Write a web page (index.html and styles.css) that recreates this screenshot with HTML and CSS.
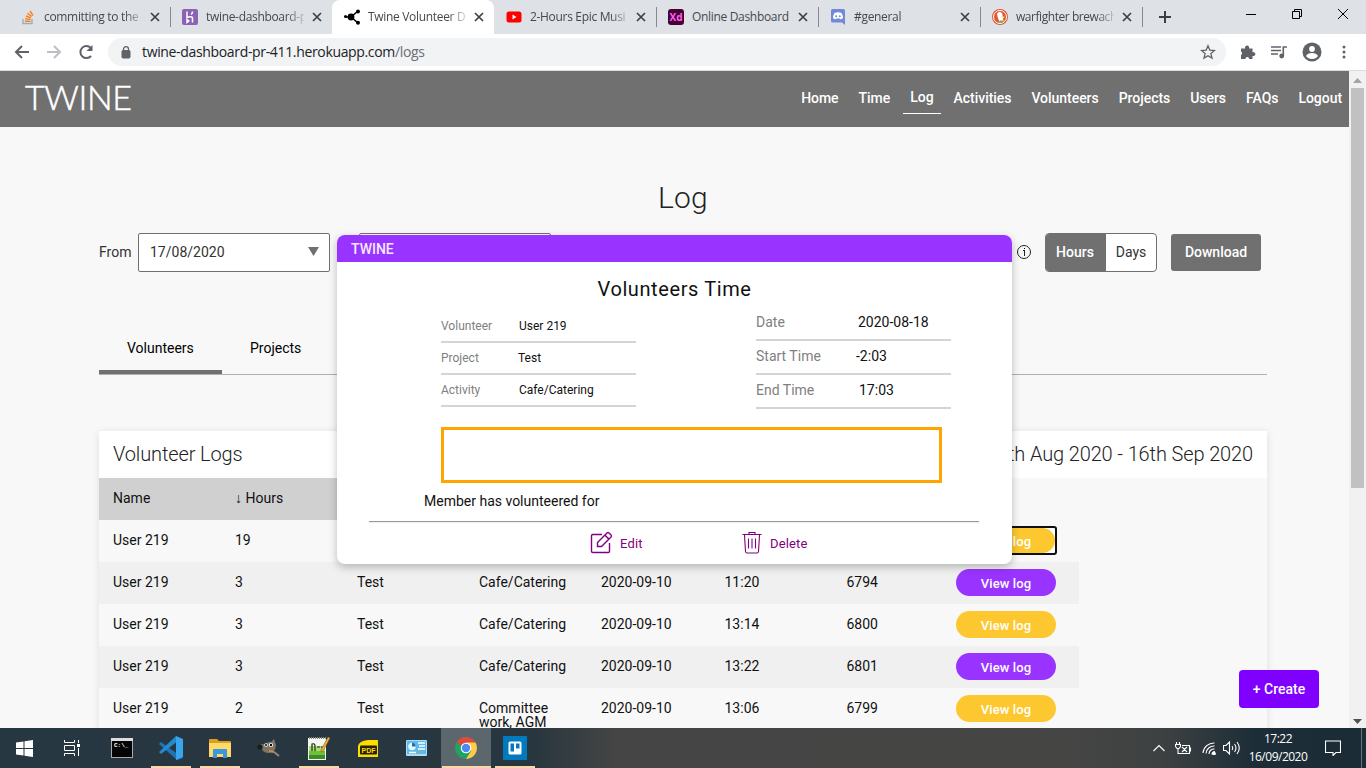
FILE: index.html
```html
<!DOCTYPE html>
<html lang="en">
<head>
<meta charset="utf-8">
<title>Twine Volunteer Dashboard</title>
<link rel="stylesheet" href="styles.css">
</head>
<body>
<div class="screen">
  <div class="tabstrip">
    <div class="tab"><svg class="fav" viewBox="0 0 16 16"><path d="M3 10v4.5h9V10" fill="none" stroke="#a8abae" stroke-width="1.4"/><path d="M5 12.3h5.5M5.2 9.8l5.4.6M5.9 7l5.1 1.8M7.4 4.2l4.3 3.3M10 2l3 4.6" stroke="#f48024" stroke-width="1.4"/></svg><span class="tab-title">committing to the</span><svg class="x" viewBox="0 0 10 10"><path d="M1 1l8 8M9 1l-8 8"/></svg></div>
    <div class="tab sep"><svg class="fav" viewBox="0 0 16 16"><rect width="16" height="16" rx="2" fill="#8a63b5"/><path d="M5 2.5v6c2-1 5.500-1.500 5.500.5v4.500M10.500 2.500c0 1.500-.5 2.300-1.300 3M5 10.500v3l1.800-1.500z" fill="none" stroke="#fff" stroke-width="1.500"/></svg><span class="tab-title">twine-dashboard-p</span><svg class="x" viewBox="0 0 10 10"><path d="M1 1l8 8M9 1l-8 8"/></svg></div>
    <div class="tab active"><svg class="fav" viewBox="0 0 16 16"><path d="M1 8h6M7 8l7-6M7 8l7 6" stroke="#000" stroke-width="1.600"/><circle cx="7" cy="8" r="3.400"/><circle cx="1.500" cy="7.500" r="1.500"/><circle cx="14" cy="2.500" r="2"/><circle cx="14" cy="13.800" r="2"/></svg><span class="tab-title">Twine Volunteer D</span><svg class="x" viewBox="0 0 10 10"><path d="M1 1l8 8M9 1l-8 8"/></svg></div>
    <div class="tab"><svg class="fav" viewBox="0 0 16 16"><rect x=".5" y="2.500" width="15" height="11" rx="2.500" fill="#f00"/><path d="M6.500 5.500v5l4-2.500z" fill="#fff"/></svg><span class="tab-title">2-Hours Epic Musi</span><svg class="x" viewBox="0 0 10 10"><path d="M1 1l8 8M9 1l-8 8"/></svg></div>
    <div class="tab sep"><span class="fav xd">Xd</span><span class="tab-title full">Online Dashboard</span><svg class="x" viewBox="0 0 10 10"><path d="M1 1l8 8M9 1l-8 8"/></svg></div>
    <div class="tab sep"><svg class="fav" viewBox="0 0 16 16"><path d="M2.500 0h11Q15 0 15 1.500V16l-3-2.500H2.500Q1 13.500 1 12V1.500Q1 0 2.500 0z" fill="#7289da"/><path d="M4.500 4q3.500-1.300 7 0 1.500 2.500 1.500 5-1.200 1.200-2.600 1.200l-.6-.8H6.200l-.6.800Q4.200 10.200 3 9q0-2.500 1.500-5z" fill="#fff"/><circle cx="6.200" cy="7.300" r="1" fill="#7289da"/><circle cx="9.800" cy="7.300" r="1" fill="#7289da"/></svg><span class="tab-title">#general</span><svg class="x" viewBox="0 0 10 10"><path d="M1 1l8 8M9 1l-8 8"/></svg></div>
    <div class="tab sep"><svg class="fav" viewBox="0 0 16 16"><circle cx="8" cy="8" r="8" fill="#de5833"/><circle cx="8" cy="8" r="6.500" fill="none" stroke="#fff"/><path d="M5 5q1-2.500 3.500-1.800Q11 4 10.500 7l2 1.200-1.500 1 .5 3.300-3.500 1.400Q5.500 9.500 5 5z" fill="#fff"/><path d="M9 7.400l3.500.4-2.500 1z" fill="#fdb813"/><path d="M7.500 11.500h4l-1 2-3 .5z" fill="#5fb54b"/></svg><span class="tab-title tight">warfighter brewach</span><svg class="x" viewBox="0 0 10 10"><path d="M1 1l8 8M9 1l-8 8"/></svg></div>
    <div class="newtab sep"><svg width="12" height="12" viewBox="0 0 12 12"><path d="M6 0v12M0 6h12" stroke="#3c4043" stroke-width="2"/></svg></div>
    <div class="winbtns">
      <svg width="10" height="10" viewBox="0 0 10 10"><path d="M0 5.500h10"/></svg>
      <svg width="10" height="10" viewBox="0 0 10 10"><path d="M.5 2.500h7v7h-7zM2.500 2V.5h7v7H8"/></svg>
      <svg width="10" height="10" viewBox="0 0 10 10"><path d="M0 0l10 10M10 0L0 10"/></svg>
    </div>
  </div>

  <div class="toolbar">
    <div class="navicons">
      <svg width="16" height="14" viewBox="0 0 16 14"><path d="M15 7H2M8 1L2 7l6 6" fill="none" stroke="#5f6368" stroke-width="2"/></svg>
      <svg width="16" height="14" viewBox="0 0 16 14"><path d="M1 7h13M8 1l6 6-6 6" fill="none" stroke="#bdc1c6" stroke-width="2"/></svg>
      <svg width="16" height="16" viewBox="0 0 16 16"><path d="M13 12a6 6 0 1 1-.2-8" fill="none" stroke="#5f6368" stroke-width="2"/><path d="M14.500 1v6H8.500z" fill="#5f6368"/></svg>
    </div>
    <div class="omnibox">
      <svg width="10" height="13" viewBox="0 0 10 13"><rect x="1" y="4.500" width="8" height="7.500" rx="1" fill="#5f6368" stroke="#5f6368"/><path d="M2.500 5V3.200a2.500 2.500 0 0 1 5 0V5" fill="none" stroke="#5f6368" stroke-width="1.300"/></svg>
      <span class="url">twine-dashboard-pr-411.herokuapp.com<i>/logs</i></span>
      <svg width="16" height="16" viewBox="0 0 16 16"><path d="M8 1.800l1.800 4.300 4.700.4-3.600 3.100 1.100 4.500L8 11.700l-4 2.400 1.100-4.500L1.500 6.500l4.700-.4z" fill="none" stroke="#5f6368" stroke-width="1.300"/></svg>
    </div>
    <div class="exticons">
      <svg width="16" height="16" viewBox="0 0 16 16"><path d="M1 4.500h4.200a2.100 2.100 0 1 1 3.800 0h3.500v3.800a2 2 0 1 1 0 3.600V15H9.200a1.900 1.900 0 0 0-3.800 0H1v-4a2 2 0 0 0 0-3.600z" fill="#5f6368"/></svg>
      <svg width="18" height="16" viewBox="0 0 18 16"><path d="M1 3h10M1 6.500h10M1 10h7M13.300 12V3H17" fill="none" stroke="#5f6368" stroke-width="1.600"/><circle cx="11.700" cy="12" r="2.400" fill="#5f6368"/></svg>
      <svg width="20" height="20" viewBox="0 0 20 20"><circle cx="10" cy="10" r="9.500" fill="#5f6368"/><circle cx="10" cy="7" r="2.900" fill="#fff"/><path d="M4 14q1.500-3 6-3t6 3q-2 3-6 3t-6-3z" fill="#fff"/></svg>
      <svg width="4" height="14" viewBox="0 0 4 14"><g fill="#5f6368"><circle cx="2" cy="2" r="1.500"/><circle cx="2" cy="7" r="1.500"/><circle cx="2" cy="12" r="1.500"/></g></svg>
    </div>
  </div>

  <div class="viewport">
    <div class="page">
      <nav class="nav">
        <span class="logo">TWINE</span>
        <div class="links"><a>Home</a><a>Time</a><a class="current">Log</a><a>Activities</a><a>Volunteers</a><a>Projects</a><a>Users</a><a>FAQs</a><a>Logout</a></div>
      </nav>
      <h1>Log</h1>
      <div class="filters">
        <span class="from">From</span>
        <div class="select">17/08/2020<svg width="11" height="9" viewBox="0 0 11 9"><path d="M0 0h11L5.500 9z" fill="#707070"/></svg></div>
        <div class="select second"></div>
        <svg class="info" width="14" height="14" viewBox="0 0 14 14"><circle cx="7" cy="7" r="6.500" fill="none" stroke="#222"/><path d="M7.500 5v6M6 5.500h1.500" fill="none" stroke="#222"/><path d="M7 3h1v1H7z"/></svg>
        <div class="toggle"><b>Hours</b><span>Days</span></div>
        <div class="download">Download</div>
      </div>
      <div class="ptabs"><span class="on">Volunteers</span><span>Projects</span></div>
      <section class="card">
        <div class="cardhead"><span>Volunteer Logs</span><span>17th Aug 2020 - 16th Sep 2020</span></div>
        <div class="row thead"><span>Name</span><span>↓ Hours</span></div>
        <div class="row"><span>User 219</span><span>19</span><span></span><span></span><span></span><span></span><span></span><button class="focus"><em class="pill">View log</em></button></div>
        <div class="row alt"><span>User 219</span><span>3</span><span>Test</span><span>Cafe/Catering</span><span>2020-09-10</span><span>11:20</span><span>6794</span><button class="pill violet">View log</button></div>
        <div class="row"><span>User 219</span><span>3</span><span>Test</span><span>Cafe/Catering</span><span>2020-09-10</span><span>13:14</span><span>6800</span><button class="pill">View log</button></div>
        <div class="row alt"><span>User 219</span><span>3</span><span>Test</span><span>Cafe/Catering</span><span>2020-09-10</span><span>13:22</span><span>6801</span><button class="pill violet">View log</button></div>
        <div class="row"><span>User 219</span><span>2</span><span>Test</span><span>Committee work, AGM</span><span>2020-09-10</span><span>13:06</span><span>6799</span><button class="pill">View log</button></div>
      </section>

      <div class="modal">
        <div class="mhead">TWINE</div>
        <h2>Volunteers Time</h2>
        <div class="fields">
          <dl class="small">
            <div><dt>Volunteer</dt><dd>User 219</dd></div>
            <div><dt>Project</dt><dd class="nudge-l">Test</dd></div>
            <div><dt>Activity</dt><dd>Cafe/Catering</dd></div>
          </dl>
          <dl class="large">
            <div><dt>Date</dt><dd>2020-08-18</dd></div>
            <div><dt>Start Time</dt><dd class="nudge-l">-2:03</dd></div>
            <div><dt>End Time</dt><dd class="nudge-r">17:03</dd></div>
          </dl>
        </div>
        <div class="notes"></div>
        <p class="member">Member has volunteered for</p>
        <hr>
        <div class="actions">
          <span class="edit"><svg width="23" height="23" viewBox="0 0 23 23"><path d="M12 3.500H2.800Q1.500 3.500 1.500 4.800v15.400q0 1.300 1.300 1.300h15.400q1.300 0 1.300-1.300V12" /><path d="M7.500 15.500v-4L17 2q1-1 2 0l2 2q1 1 0 2l-9.500 9.500zM15 4.200L18.800 8"/></svg><em>Edit</em></span>
          <span class="delete"><svg width="20" height="23" viewBox="0 0 20 23"><path d="M.5 3.500h19M7 3V1.500h6V3M2.500 4l1 16.500q.2 1.500 1.500 1.500h10q1.300 0 1.500-1.500L17.500 4M6.500 7.500v10M10 7.500v10M13.500 7.500v10"/></svg><em>Delete</em></span>
        </div>
      </div>
      <div class="create">+ Create</div>
    </div>
    <div class="scrollbar">
      <svg width="9" height="5" viewBox="0 0 9 5"><path d="M0 5h9L4.500 0z" fill="#a3a3a3"/></svg>
      <div class="thumb"></div>
      <svg width="9" height="5" viewBox="0 0 9 5"><path d="M0 0h9L4.500 5z" fill="#505050"/></svg>
    </div>
  </div>

  <div class="taskbar">
    <div class="task start"><svg width="17" height="17" viewBox="0 0 17 17"><path d="M0 2.500l7.500-1V8H0zM8.500 1.300L17 0v8H8.500zM0 9h7.500v6.500l-7.500-1zM8.500 9H17v8l-8.500-1.300z" fill="#fff"/></svg></div>
    <div class="task start"><svg width="16" height="16" viewBox="0 0 16 16"><path d="M.5 0v2.500h10V0M.5 16v-2.500h10V16M.5 5.500h10v5H.5zM14.500 0v3M14.500 8v8" fill="none" stroke="#fff"/><path d="M13 4h3v3h-3z" fill="#fff"/></svg></div>
    <div class="task first"><svg width="22" height="20" viewBox="0 0 22 20"><path d="M0 0h22v20H0z" fill="#aaa"/><path d="M0 0h22v3H0z" fill="#ddd"/><path d="M1 3h20v16H1z" fill="#050505"/><text x="3" y="9" class="cmdtext">C:\_</text></svg></div>
    <div class="task open"><svg width="24" height="24" viewBox="0 0 24 24"><path d="M0 8l2-2 22 16-6 2z" fill="#1b75b8"/><path d="M0 16l2 2L19 5 17 0z" fill="#228bd0"/><path d="M17 0l7 3v18l-7 3z" fill="#39a5ef"/></svg></div>
    <div class="task open"><svg width="22" height="20" viewBox="0 0 22 20"><path d="M0 2q0-1 1-1h7l2 2h11q1 0 1 1v14H0z" fill="#dda01e"/><path d="M0 5h22v14H0z" fill="#ffd96b"/><path d="M4 20v-8q0-1 1-1h12q1 0 1 1v8h-4v-4H8v4z" fill="#3a96dd"/></svg></div>
    <div class="task"><svg width="24" height="20" viewBox="0 0 24 20"><path d="M5 6q3 1 5-1 2-2 4-1l3-3 2 6q0 7-7 8-6 0-7-4-4 0-4-3z" fill="#7b7569"/><circle cx="3" cy="9" r="2.600" fill="#1c1c1c"/><circle cx="9" cy="7" r="1.800" fill="#fff"/><circle cx="14" cy="7" r="2.100" fill="#fff"/><circle cx="9" cy="7" r="1"/><circle cx="14" cy="7" r="1.200"/><path d="M12 13l5 1" fill="none" stroke="#d8893b" stroke-width="2"/><path d="M17 14l5 4" stroke="#888" stroke-width="2"/></svg></div>
    <div class="task open"><svg width="24" height="24" viewBox="0 0 24 24"><path d="M1 2h18v22H1z" fill="#f4f7ee"/><path d="M2 10h16v13H2z" fill="#a4e070"/><path d="M2 15h16v8H2z" fill="#6dbf3c"/><path d="M2 19h16v4H2z" fill="#3d8e27"/><path d="M2 2h17" stroke="#888" stroke-dasharray="1 1" stroke-width="2"/><path d="M5 15V8q3-1 3 2v5M10 11h3M14 11h3" fill="none" stroke="#222" stroke-width="1.200"/><path d="M21 1l2 1-7 13-2 1v-2z" fill="#f5b335" stroke="#86602c" stroke-width=".6"/></svg></div>
    <div class="task"><svg width="20" height="17" viewBox="0 0 20 17"><path d="M0 6Q1 1 10 0h10v17H0z" fill="#fddc00"/><rect x="2" y="5.500" width="17" height="9" rx="1" fill="#26220b"/><text x="3.500" y="13" textLength="14" lengthAdjust="spacingAndGlyphs" class="pdftext">PDF</text></svg></div>
    <div class="task"><svg width="21" height="16" viewBox="0 0 21 16"><rect width="21" height="16" rx="1" fill="#a7ddf7"/><path d="M1 1h19v13H1z" fill="#5bb9ec"/><circle cx="6" cy="6.500" r="3.800" fill="#e6f7ff"/><path d="M6 6.500V2.700a3.800 3.800 0 0 1 3.800 3.800z" fill="#1871b8"/><path d="M12 3h7M13 6h6M12 9h7M3 12.500h7" stroke="#fff" stroke-width="1.500"/><path d="M11 11.500l2 2 2-2" fill="#e8a33d"/></svg></div>
    <div class="task open chosen"><svg width="22" height="22" viewBox="0 0 22 22"><path d="M11 11L1.500 5.500a11 11 0 0 1 19 0z" fill="#dd4b3e"/><path d="M11 11L1.500 5.500A11 11 0 0 0 11 22l5-8z" fill="#1da362"/><path d="M11 22a11 11 0 0 0 9.500-16.500H11l5 8.500z" fill="#ffcd46"/><circle cx="11" cy="11" r="5.300" fill="#fff"/><circle cx="11" cy="11" r="4.200" fill="#4a8af4"/></svg></div>
    <div class="task open"><svg width="24" height="24" viewBox="0 0 24 24"><path d="M0 0h24v24H0z" fill="#0079bf"/><rect x="5.500" y="5.500" width="13" height="13" rx="1.500" fill="#fff"/><path d="M7.500 7.500h3.500v8H7.500zM13 7.500h3.500v5H13z" fill="#0079bf"/></svg></div>
    <div class="tray">
      <svg class="t1" width="12" height="8" viewBox="0 0 12 8"><path d="M.5 7L6 1.500 11.500 7"/></svg>
      <svg class="t2" width="17" height="12" viewBox="0 0 17 12"><path d="M1.500 0v2M4.500 0v2M.5 2.500h5v2l-1.500 2H2l-1.500-2zM3 6v5.500h11.500v-8H7M15.500 5.500v4M7 5l5 5M12 5l-5 5"/></svg>
      <svg class="t3" width="14" height="14" viewBox="0 0 14 14"><path d="M1 12A11 11 0 0 1 12.500 2M4 12.500A8 8 0 0 1 12.500 5M7 13a5 5 0 0 1 5.500-5M10 13.500a3 3 0 0 1 3-3"/><circle cx="12" cy="12.500" r="1.300" fill="#fff"/></svg>
      <svg class="t4" width="17" height="14" viewBox="0 0 17 14"><path d="M.5 4.500H3L6.500 1v12L3 9.500H.5zM9 5q1.500 2 0 4M11.500 3q3 4 0 8M14 1q4.500 6 0 12"/></svg>
      <div class="clock"><span>17:22</span><span>16/09/2020</span></div>
      <svg class="t5" width="16" height="16" viewBox="0 0 16 16"><path d="M.5 1h15v11.500H11l-3 3v-3H.5z"/></svg>
    </div>
  </div>
</div>
</body>
</html>
```
FILE: styles.css
```css
* { box-sizing: border-box; }
body { margin: 0; font-family: Roboto, "Liberation Sans", sans-serif; font-size: 14px; color: #111; }
h1, h2, p, dl, dd, hr { margin: 0; font-weight: 400; }
em { font-style: normal; }
svg { display: block; flex: none; }
.screen { width: 1366px; height: 768px; display: flex; flex-direction: column; overflow: hidden; }

/* browser frame */
.tabstrip { height: 34px; flex: none; background: #dee1e6; display: flex; padding-left: 8px; font: 12px/34px "Open Sans", "Noto Sans", sans-serif; color: #45494d; }
.tab { width: 162px; height: 34px; display: flex; align-items: center; padding-left: 12px; flex: none; }
.tab.active { background: #fff; border-radius: 8px 8px 0 0; }
.sep { background: linear-gradient(#85898d, #85898d) 0 7px / 1px 20px no-repeat; }
.fav { width: 16px; height: 16px; flex: none; }
.xd { background: #470137; color: #ff61f6; font: 700 10px/16px "Open Sans", sans-serif; text-align: center; border-radius: 3px; }
.tab-title { width: 98px; height: 34px; margin-left: 8px; white-space: nowrap; letter-spacing: -.32px; -webkit-mask-image: linear-gradient(90deg, #000 80px, transparent 102px); mask-image: linear-gradient(90deg, #000 80px, transparent 102px); }
.tab-title.full { -webkit-mask-image: none; mask-image: none; }
.tab-title.tight { letter-spacing: -.45px; }
.x { width: 10px; height: 10px; margin-left: 8px; stroke: #3c4043; stroke-width: 1.7; }
.newtab { width: 45px; display: flex; align-items: center; padding-left: 17px; }
.winbtns { margin-left: auto; display: flex; gap: 36px; padding: 9px 18px 0 0; fill: none; stroke: #000; }
.toolbar { height: 37px; flex: none; background: #fff; border-bottom: 1px solid #dadce0; display: flex; align-items: center; }
.navicons { display: flex; align-items: center; gap: 16px; padding-left: 14px; width: 108px; flex: none; }
.omnibox { width: 1118px; height: 28px; border-radius: 14px; background: #f1f3f4; display: flex; align-items: center; padding: 0 10px 0 13px; font: 14px/28px "Open Sans", "Noto Sans", sans-serif; }
.url { margin-left: 11px; flex: 1; color: #202124; letter-spacing: -.34px; }
.url i { font-style: normal; color: #6b6f73; }
.exticons { display: flex; align-items: center; gap: 14px; padding-left: 14px; }
.exticons svg:last-child { margin-left: 6px; }

/* application page */
.viewport { flex: 1; min-height: 0; display: flex; }
.page { width: 1349px; height: 657px; background: #f8f8f8; position: relative; overflow: hidden; }
.nav { height: 56px; background: #707070; display: flex; justify-content: space-between; color: #fff; }
.logo { font: 300 34px/51px Lato, "Open Sans", sans-serif; padding-left: 25px; letter-spacing: -.4px; -webkit-text-stroke: .5px #fff; }
.links { display: flex; gap: 6px; padding-top: 16px; font-weight: 500; letter-spacing: -.04px; }
.links a { height: 28px; line-height: 23px; padding: 0 7px; }
.links .current { height: 27px; line-height: 21px; border-bottom: 1px solid #fff; }
h1 { font-size: 30px; font-weight: 300; line-height: 36px; letter-spacing: .2px; width: 1366px; text-align: center; padding-top: 53px; height: 106px; color: #222; }
.filters { display: flex; align-items: center; height: 39px; padding-left: 99px; color: #333; }
.from { width: 39px; height: 18px; }
.select { width: 192px; height: 39px; background: #fff; border: 1px solid #707070; border-radius: 2px; display: flex; align-items: center; justify-content: space-between; padding: 0 10px 2px 11px; letter-spacing: 0; }
.select svg { margin-top: -1px; }
.second { margin-left: 29px; }
.info { margin: -2px 0 0 466px; }
.toggle { display: flex; width: 112px; height: 39px; margin-left: 14px; border: 1px solid #707070; border-radius: 4px; overflow: hidden; background: #fff; line-height: 37px; text-align: center; }
.toggle b { width: 60px; background: #707070; color: #fff; font-weight: 500; padding-right: 2px; }
.toggle span { flex: 1; }
.download { width: 90px; height: 37px; margin-left: 14px; border-radius: 3px; background: #707070; color: #fff; line-height: 37px; text-align: center; font-weight: 500; }
.ptabs { display: flex; margin: 49px 82px 0 99px; height: 54px; border-bottom: 1px solid #b0b0b0; color: #000; line-height: 54px; }
.ptabs span { padding: 0 28px; height: 54px; }
.ptabs .on { border-bottom: 4px solid #707070; width: 123px; height: 53px; }
.card { margin: 56px 82px 0 99px; height: 330px; box-shadow: 0 1px 8px rgba(0, 0, 0, .1); }
.cardhead { height: 47px; background: #fff; display: flex; justify-content: space-between; padding: 0 14px; font-size: 20px; font-weight: 300; line-height: 46px; color: #222; letter-spacing: -.13px; }
.row { width: 980px; height: 42px; display: grid; grid-template-columns: 122px 122px 122px 122px 123.5px 122px 109.5px 102px; padding: 13px 0 0 14px; line-height: 14px; }
.row.alt { background: #f0f0f0; }
.row.thead { width: 858px; background: #d0d0d0; }
.row span { width: 90px; }
.pill { display: block; width: 100px; height: 27px; margin-top: -6px; border: 0; border-radius: 14px; background: #fdc82f; color: #fff; font: 500 13px/29px Roboto, sans-serif; padding: 0; letter-spacing: .1px; text-align: center; }
.pill.violet { background: #9933ff; }
.focus { width: 102px; height: 29px; margin: -7px 0 0 -1px; border: 2px solid #101010; border-radius: 3px; background: #fff; padding: 0; display: flex; }
.focus .pill { width: 98px; height: 25px; margin: 0; line-height: 27px; }
.create { position: absolute; left: 1239px; top: 599px; width: 80px; height: 38px; border-radius: 4px; background: #8000ff; color: #fff; font-weight: 500; line-height: 38px; text-align: center; }

/* dialog */
.modal { position: absolute; left: 337px; top: 164px; width: 675px; height: 329px; border-radius: 8px; background: #fff; overflow: hidden; box-shadow: 0 3px 9px rgba(0, 0, 0, .25); }
.mhead { height: 27px; background: #9933ff; color: #f4eaff; font-weight: 500; line-height: 28px; padding-left: 14px; }
h2 { font-size: 20px; line-height: 24px; letter-spacing: .6px; text-align: center; padding-top: 15px; height: 49px; }
.fields { display: flex; gap: 120px; padding-left: 104px; height: 116px; }
.fields dl { width: 195px; }
.fields dl div { display: flex; border-bottom: 2px solid #d4d4d4; }
dt { color: #808080; }
.small { font-size: 12px; }
.small div { height: 32px; line-height: 30px; }
.small dt { width: 78px; }
.large div { height: 34px; line-height: 30px; }
.large dt { width: 102px; }
.large div:first-child { height: 30px; line-height: 22px; }
.nudge-l { margin-left: -1px; }
.large .nudge-l { margin-left: -2px; }
.nudge-r { margin-left: 1px; }
.notes { width: 501px; height: 56px; margin-left: 104px; border: 3px solid #ffa500; }
.member { padding-left: 87px; line-height: 36px; height: 38px; }
hr { border: 0; height: 2px; margin: 0 33px 0 32px; background: #999; border-bottom: 1px solid #eee; }
.actions { display: flex; align-items: center; padding: 8px 0 0 253px; color: #800080; font-size: 13px; letter-spacing: .15px; }
.actions span { display: flex; align-items: center; }
.actions em { padding-top: 2px; }
.actions svg { fill: none; stroke: #800080; stroke-width: 1.4; }
.actions .delete svg { stroke-width: 1.1; }
.edit { width: 152px; gap: 7px; }
.delete { gap: 8px; }

.scrollbar { width: 17px; background: #f1f1f1; display: flex; flex-direction: column; align-items: center; padding: 7px 0 4px; }
.thumb { width: 13px; height: 400px; margin: 5px 0 auto; background: #c1c1c1; }

/* desktop taskbar */
.taskbar { height: 40px; flex: none; background: linear-gradient(90deg, #273741 0, #28363f 39%, #444544 45%, #454544 78%, #3e4142 85%, #1c2d37 92%, #1b2c36 100%); display: flex; }
.task { width: 49.15px; display: flex; align-items: center; justify-content: center; flex: none; }
.task.start { width: 48px; }
.task.first { margin-left: 1.5px; }
.open { background: linear-gradient(#fbd6a6, #fbd6a6) center bottom / 40px 2px no-repeat; }
.chosen { background: linear-gradient(#fbd6a6, #fbd6a6) center bottom / 49px 2px no-repeat, #5b676d; }
.cmdtext { font: 700 6px "Liberation Mono", monospace; fill: #fff; }
.pdftext { font: 700 8px "Liberation Sans", sans-serif; fill: #fddc00; }
.tray { margin-left: auto; display: flex; align-items: center; width: 214px; border-right: 1px solid #67747c; margin-right: 4px; }
.tray svg { fill: none; stroke: #fff; stroke-width: 1.1; }
.t1 { margin-left: 5px; }
.t2 { margin-left: 10px; }
.t3 { margin-left: 10px; }
.t4 { margin-left: 7px; }
.clock { width: 62px; margin-left: 7px; display: flex; flex-direction: column; align-items: center; font: 12px/18px "Open Sans", "Noto Sans", sans-serif; letter-spacing: -.5px; color: #fff; }
.t5 { margin-left: 16px; }
```
